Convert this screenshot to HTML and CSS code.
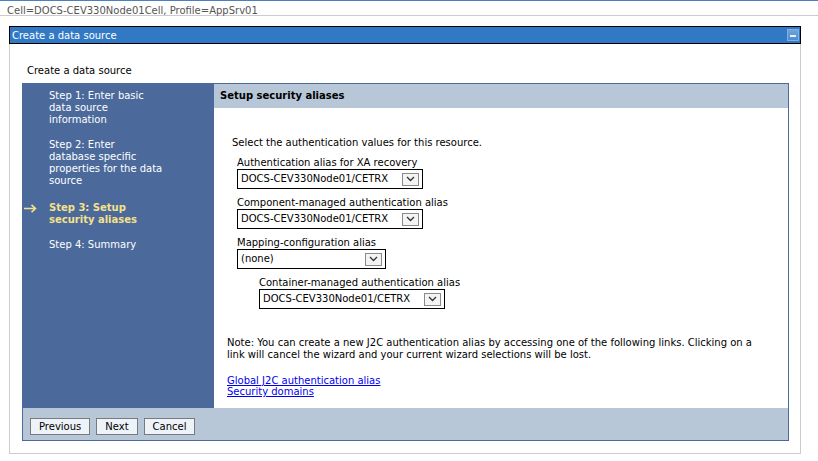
FILE: index.html
```html
<!DOCTYPE html>
<html>
<head>
<meta charset="utf-8">
<link rel="stylesheet" href="styles.css">
</head>
<body>
<div class="topline"></div>
<div class="crumb">Cell=DOCS-CEV330Node01Cell, Profile=AppSrv01</div>
<div class="panel">
  <div class="titlebar">
    <span class="ttext">Create a data source</span>
    <span class="min"><span class="dash"></span></span>
  </div>
  <div class="panel-body">
    <div class="subtitle">Create a data source</div>
    <div class="wizard">
      <div class="nav">
        <div class="step"><span class="marker"></span><span class="stext">Step 1: Enter basic<br>data source<br>information</span></div>
        <div class="step"><span class="marker"></span><span class="stext">Step 2: Enter<br>database specific<br>properties for the data<br>source</span></div>
        <div class="step active"><span class="marker"><svg width="13" height="9" viewBox="0 0 13 9"><path d="M0 4.5H11.5M7.5 0.8L11.5 4.5L7.5 8.2" fill="none" stroke="#f6e08a" stroke-width="1.6"/></svg></span><span class="stext">Step 3: Setup<br>security aliases</span></div>
        <div class="step"><span class="marker"></span><span class="stext">Step 4: Summary</span></div>
      </div>
      <div class="main">
        <div class="main-head">Setup security aliases</div>
        <div class="main-body">
          <div class="form">
            <div class="intro">Select the authentication values for this resource.</div>
            <div class="field">
              <div class="flabel">Authentication alias for XA recovery</div>
              <div class="sel wide"><span>DOCS-CEV330Node01/CETRX</span><span class="arrow"><svg width="9" height="6" viewBox="0 0 9 6"><path d="M1 1L4.5 4.5L8 1" fill="none" stroke="#333" stroke-width="1.3"/></svg></span></div>
            </div>
            <div class="field">
              <div class="flabel">Component-managed authentication alias</div>
              <div class="sel wide"><span>DOCS-CEV330Node01/CETRX</span><span class="arrow"><svg width="9" height="6" viewBox="0 0 9 6"><path d="M1 1L4.5 4.5L8 1" fill="none" stroke="#333" stroke-width="1.3"/></svg></span></div>
            </div>
            <div class="field">
              <div class="flabel">Mapping-configuration alias</div>
              <div class="sel narrow"><span>(none)</span><span class="arrow"><svg width="9" height="6" viewBox="0 0 9 6"><path d="M1 1L4.5 4.5L8 1" fill="none" stroke="#333" stroke-width="1.3"/></svg></span></div>
            </div>
            <div class="field nested">
              <div class="flabel">Container-managed authentication alias</div>
              <div class="sel wide"><span>DOCS-CEV330Node01/CETRX</span><span class="arrow"><svg width="9" height="6" viewBox="0 0 9 6"><path d="M1 1L4.5 4.5L8 1" fill="none" stroke="#333" stroke-width="1.3"/></svg></span></div>
            </div>
          </div>
          <p class="note">Note: You can create a new J2C authentication alias by accessing one of the following links. Clicking on a link will cancel the wizard and your current wizard selections will be lost.</p>
          <div class="links">
            <a href="#">Global J2C authentication alias</a>
            <a href="#">Security domains</a>
          </div>
        </div>
      </div>
      <div class="footer">
        <button class="btn">Previous</button>
        <button class="btn">Next</button>
        <button class="btn">Cancel</button>
      </div>
    </div>
  </div>
</div>
</body>
</html>
```

FILE: styles.css
```css
* { box-sizing: border-box; }
body {
  margin: 0;
  font-family: "DejaVu Sans", Verdana, sans-serif;
  font-size: 10px;
  line-height: 12px;
  color: #000;
  background: #fff;
}
.topline { height: 1px; background: #4a7fc1; }
.crumb {
  height: 15px;
  padding: 4px 0 0 7px;
  line-height: 11px;
  color: #555;
  border-bottom: 1px solid #cccccc;
}
.panel {
  margin: 10px 0 0 9px;
  width: 792px;
}
.titlebar {
  height: 18px;
  border: 1px solid #000;
  background: #3179c4;
  color: #fff;
  padding-left: 2px;
  display: flex;
  justify-content: space-between;
  align-items: flex-start;
}
.ttext { padding-top: 2px; line-height: 14px; }
.min {
  width: 12px;
  height: 12px;
  margin: 2px 1px 0 0;
  background: linear-gradient(#6ea2dc, #4f8ccf);
  border: 1px solid #7eaee3;
  display: flex;
  align-items: flex-end;
  justify-content: center;
  padding-bottom: 3px;
}
.dash { width: 6px; height: 2px; background: #e8f0fa; }
.panel-body {
  border: 1px solid #cccccc;
  border-top: 0;
  padding: 21px 11px 12px 12px;
}
.subtitle { padding-left: 5px; height: 12px; margin-bottom: 6px; }
.wizard {
  display: grid;
  grid-template-columns: 192px 1fr;
  grid-template-rows: 325px auto;
}
.nav {
  background: #4b6a9b;
  color: #fff;
  padding-top: 7px;
}
.step { display: flex; margin-bottom: 13px; }
.step.active { padding-top: 2px; color: #f6e08a; font-weight: bold; }
.marker { width: 27px; flex: none; padding: 2px 0 0 2px; }
.stext { width: 140px; white-space: nowrap; }
.main {
  border-right: 1px solid #4b6a9b;
  display: flex;
  flex-direction: column;
}
.main-head {
  background: #b7c7d8;
  border-top: 1px solid #4b6a9b;
  height: 25px;
  padding: 6px 0 0 6px;
  font-weight: bold;
  line-height: 12px;
}
.main-body { padding: 29px 20px 0 13px; }
.form { padding-left: 5px; }
.intro { margin-bottom: 8px; }
.field { margin-left: 5px; margin-bottom: 8px; }
.field.nested { margin-left: 27px; margin-top: 2px; }
.sel {
  height: 20px;
  border: 1px solid #000;
  background: #fff;
  display: flex;
  align-items: center;
  justify-content: space-between;
  padding: 0 3px 0 3px;
}
.sel.wide { width: 186px; }
.sel.narrow { width: 149px; }
.arrow {
  width: 17px;
  height: 13px;
  border: 1px solid #8a8a8a;
  background: #f4f4f4;
  display: flex;
  align-items: center;
  justify-content: center;
}
.note { margin: 28px 0 14px 0; max-width: 540px; }
.links { display: flex; flex-direction: column; line-height: 11px; }
.links a { color: #0000ee; align-self: flex-start; }
.footer {
  grid-column: 1 / 3;
  background: #b7c7d8;
  border: 1px solid #4b6a9b;
  border-top: 0;
  height: 33px;
  padding: 10px 0 0 7px;
  display: flex;
  gap: 6px;
  align-items: flex-start;
}
.btn {
  height: 17px;
  font-family: "DejaVu Sans", Verdana, sans-serif;
  font-size: 10px;
  line-height: 13px;
  padding: 0 8px;
  background: #eef3f9;
  border: 1px solid #7a7a7a;
  border-radius: 0;
  color: #000;
}
```
